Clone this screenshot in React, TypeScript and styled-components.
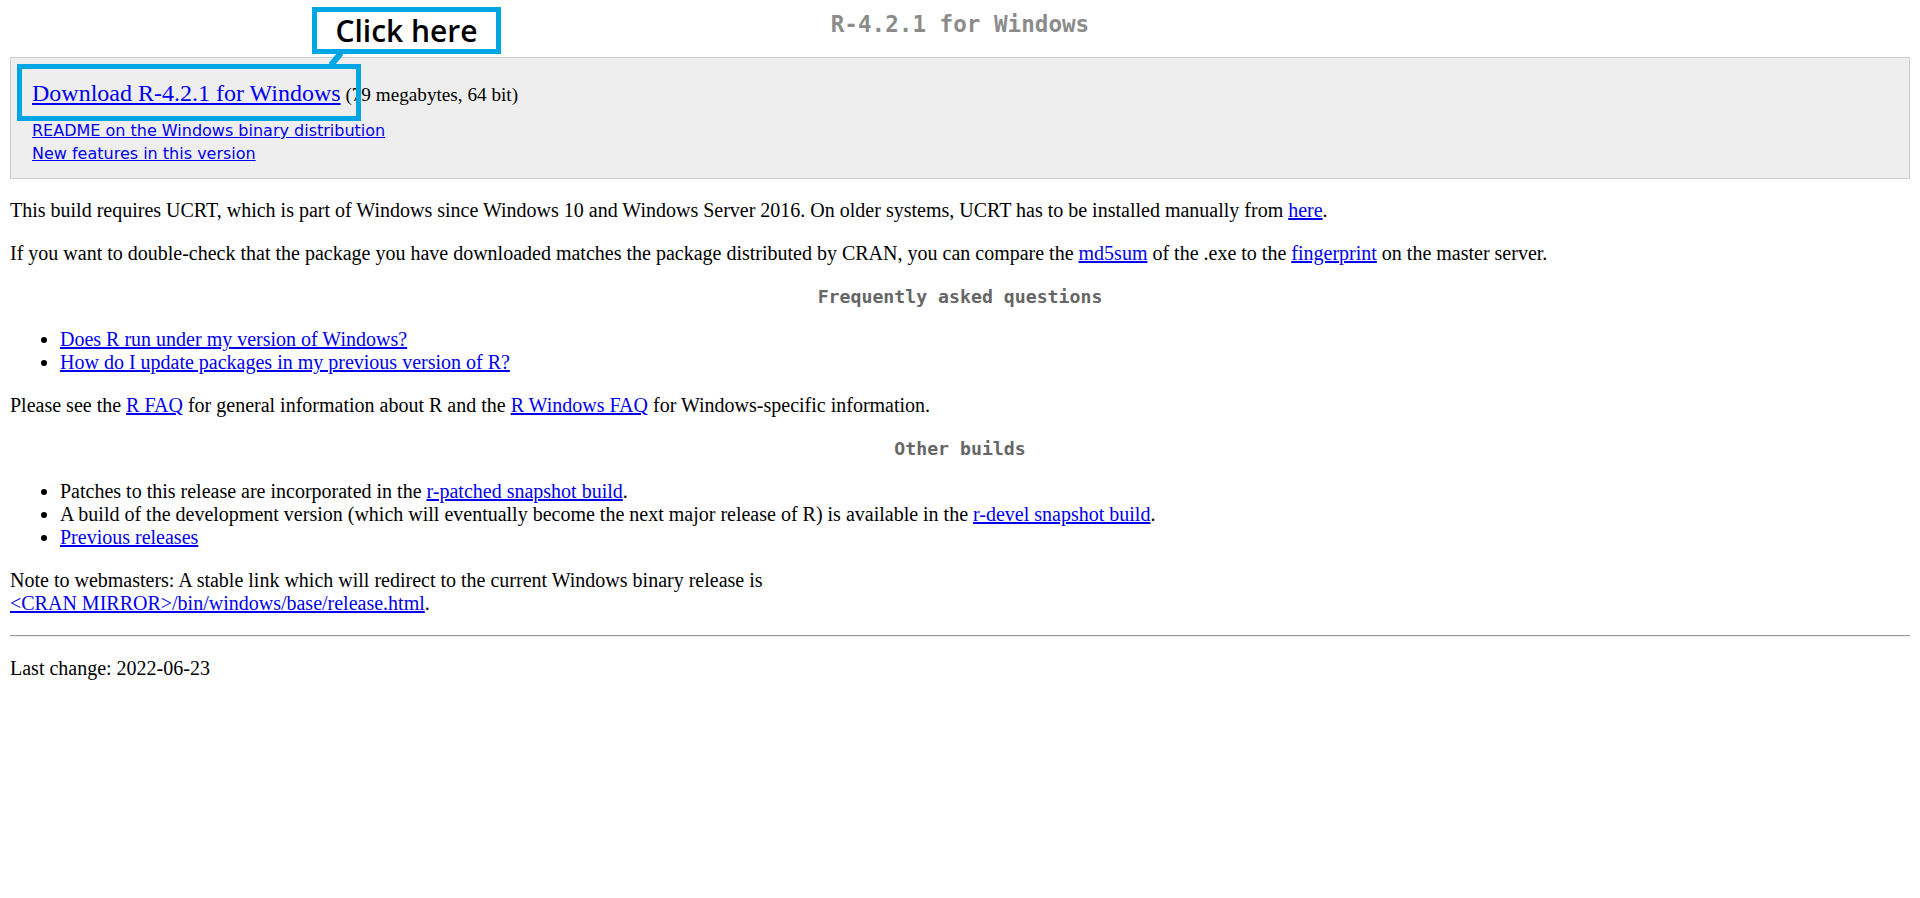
import styled, { createGlobalStyle } from 'styled-components';

const GlobalStyle = createGlobalStyle`
  html, body {
    margin: 0;
    background: #ffffff;
  }
  body {
    font-family: 'Liberation Serif', 'Times New Roman', serif;
    font-size: 20px;
    color: #000000;
  }
`;

const Page = styled.div`
  position: relative;
  padding: 10px;
`;

const Title = styled.h1`
  margin: 0 0 19px;
  font-family: 'DejaVu Sans Mono', monospace;
  font-size: 22.6px;
  font-weight: bold;
  line-height: 28px;
  color: #8c8c8c;
  text-align: center;
`;

const DownloadPanel = styled.div`
  display: flex;
  flex-direction: column;
  gap: 11px;
  padding: 22px 21px 13px;
  background: #eeeeee;
  border: 1px solid #cccccc;
`;

const DownloadRow = styled.div`
  line-height: 27px;
  font-size: 19.2px;
`;

const BigLink = styled.a`
  font-size: 24px;
  color: #0000ee;
`;

const SideLinks = styled.div`
  display: flex;
  flex-direction: column;
  align-items: flex-start;
  line-height: 23px;
`;

const SansLink = styled.a`
  font-family: 'DejaVu Sans', Verdana, sans-serif;
  font-size: 16px;
  color: #0000ee;
`;

const Link = styled.a`
  color: #0000ee;
`;

const Paragraph = styled.p`
  margin: 20px 0;
  line-height: 23px;
`;

const SectionHeading = styled.h3`
  margin: 19px 0 20px;
  font-family: 'DejaVu Sans Mono', monospace;
  font-size: 18.2px;
  font-weight: bold;
  line-height: 23px;
  color: #666666;
  text-align: center;
`;

const BulletList = styled.ul`
  margin: 20px 0;
  padding-left: 50px;
  line-height: 23px;
`;

const Rule = styled.hr`
  height: 0;
  margin: 19px 0 20px;
  border: none;
  border-top: 1px solid #9a9a9a;
  border-bottom: 1px solid #eeeeee;
`;

/* annotation drawn over the page */
const Callout = styled.div`
  position: absolute;
  left: 312px;
  top: 7px;
  width: 189px;
  height: 47px;
  box-sizing: border-box;
  display: flex;
  align-items: center;
  justify-content: center;
  border: 5px solid #00a6e3;
  background: #ffffff;
  font-family: 'Open Sans', 'Noto Sans', sans-serif;
  font-size: 30px;
  font-weight: 600;
  color: #000000;
  line-height: 1;
`;

const Highlight = styled.div`
  position: absolute;
  left: 17px;
  top: 64px;
  width: 344px;
  height: 57px;
  box-sizing: border-box;
  border: 5px solid #00a6e3;
  pointer-events: none;
`;

const Tail = styled.svg`
  position: absolute;
  left: 320px;
  top: 50px;
`;

export default function App() {
  return (
    <Page>
      <GlobalStyle />
      <Title>R-4.2.1 for Windows</Title>

      <DownloadPanel>
        <DownloadRow>
          <BigLink href="#">Download R-4.2.1 for Windows</BigLink> (79 megabytes, 64 bit)
        </DownloadRow>
        <SideLinks>
          <SansLink href="#">README on the Windows binary distribution</SansLink>
          <SansLink href="#">New features in this version</SansLink>
        </SideLinks>
      </DownloadPanel>

      <Paragraph>
        This build requires UCRT, which is part of Windows since Windows 10 and Windows Server 2016. On
        older systems, UCRT has to be installed manually from <Link href="#">here</Link>.
      </Paragraph>
      <Paragraph>
        If you want to double-check that the package you have downloaded matches the package distributed by
        CRAN, you can compare the <Link href="#">md5sum</Link> of the .exe to the{' '}
        <Link href="#">fingerprint</Link> on the master server.
      </Paragraph>

      <SectionHeading>Frequently asked questions</SectionHeading>
      <BulletList>
        <li>
          <Link href="#">Does R run under my version of Windows?</Link>
        </li>
        <li>
          <Link href="#">How do I update packages in my previous version of R?</Link>
        </li>
      </BulletList>
      <Paragraph>
        Please see the <Link href="#">R FAQ</Link> for general information about R and the{' '}
        <Link href="#">R Windows FAQ</Link> for Windows-specific information.
      </Paragraph>

      <SectionHeading>Other builds</SectionHeading>
      <BulletList>
        <li>
          Patches to this release are incorporated in the <Link href="#">r-patched snapshot build</Link>.
        </li>
        <li>
          A build of the development version (which will eventually become the next major release of R) is
          available in the <Link href="#">r-devel snapshot build</Link>.
        </li>
        <li>
          <Link href="#">Previous releases</Link>
        </li>
      </BulletList>
      <Paragraph>
        Note to webmasters: A stable link which will redirect to the current Windows binary release is
        <br />
        <Link href="#">&lt;CRAN MIRROR&gt;/bin/windows/base/release.html</Link>.
      </Paragraph>

      <Rule />
      <Paragraph>Last change: 2022-06-23</Paragraph>

      <Highlight />
      <Tail width="30" height="18" viewBox="0 0 30 18">
        <line x1="11" y1="15" x2="21" y2="3" stroke="#00a6e3" strokeWidth="6" />
      </Tail>
      <Callout>Click here</Callout>
    </Page>
  );
}
